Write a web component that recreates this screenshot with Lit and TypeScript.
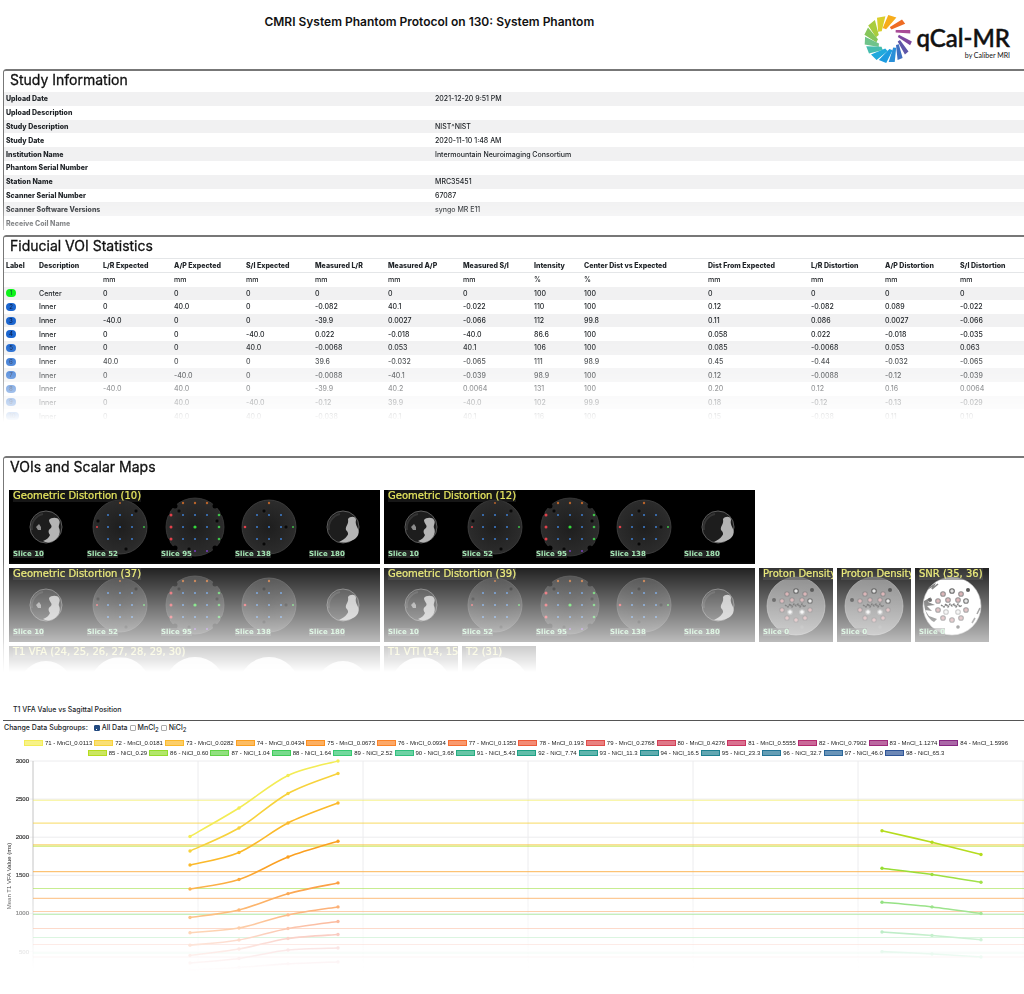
import { LitElement, html, svg, css } from "lit";
import { customElement, property, state } from "lit/decorators.js";
import { classMap } from "lit/directives/class-map.js";

const STUDY: [string, string][] = [
  ["Upload Date", "2021-12-20 9:51 PM"],
  ["Upload Description", ""],
  ["Study Description", "NIST^NIST"],
  ["Study Date", "2020-11-10 1:48 AM"],
  ["Institution Name", "Intermountain Neuroimaging Consortium"],
  ["Phantom Serial Number", ""],
  ["Station Name", "MRC35451"],
  ["Scanner Serial Number", "67087"],
  ["Scanner Software Versions", "syngo MR E11"],
  ["Receive Coil Name", ""],
];

const COLUMNS = [
  "Label", "Description", "L/R Expected", "A/P Expected", "S/I Expected", "Measured L/R", "Measured A/P",
  "Measured S/I", "Intensity", "Center Dist vs Expected", "Dist From Expected", "L/R Distortion",
  "A/P Distortion", "S/I Distortion",
];
const UNITS = ["", "", "mm", "mm", "mm", "mm", "mm", "mm", "%", "%", "mm", "mm", "mm", "mm"];
const VOIS = [
  "1 Center 0 0 0 0 0 0 100 100 0 0 0 0",
  "2 Inner 0 40.0 0 -0.082 40.1 -0.022 110 100 0.12 -0.082 0.089 -0.022",
  "3 Inner -40.0 0 0 -39.9 0.0027 -0.066 112 99.8 0.11 0.086 0.0027 -0.066",
  "4 Inner 0 0 -40.0 0.022 -0.018 -40.0 86.6 100 0.058 0.022 -0.018 -0.035",
  "5 Inner 0 0 40.0 -0.0068 0.053 40.1 106 100 0.085 -0.0068 0.053 0.063",
  "6 Inner 40.0 0 0 39.6 -0.032 -0.065 111 98.9 0.45 -0.44 -0.032 -0.065",
  "7 Inner 0 -40.0 0 -0.0088 -40.1 -0.039 98.9 100 0.12 -0.0088 -0.12 -0.039",
  "8 Inner -40.0 40.0 0 -39.9 40.2 0.0064 131 100 0.20 0.12 0.16 0.0064",
  "9 Inner 0 40.0 -40.0 -0.12 39.9 -40.0 102 99.9 0.18 -0.12 -0.13 -0.029",
  "10 Inner 0 40.0 40.0 -0.038 40.1 40.1 116 100 0.15 -0.038 0.11 0.10",
].map((r) => r.split(" "));

@customElement("qcal-logo")
export class QcalLogo extends LitElement {
  static styles = css`
    :host { display: flex; align-items: center; gap: 5px; color: #111; }
    .mark { width: 48px; height: 48px; flex: none; }
    .words { display: flex; flex-direction: column; align-items: flex-end; padding-top: 6px; }
    .name { font: 500 24px/26px Lato, sans-serif; -webkit-text-stroke: 0.5px #111; white-space: nowrap; }
    .by { font: 7px/8px Lato, sans-serif; white-space: nowrap; }
  `;
  render() {
    const petals: [number, number, string][] = [
      [79, 13, "#f7ac1b"], [107, 13, "#d9cf2c"], [135, 13, "#a9cc3d"], [160, 12, "#86c55a"],
      [184, 12, "#6fc38a"], [208, 12, "#45bcae"], [232, 12, "#1fa9dc"], [256, 12, "#1c9be0"],
      [279, 9, "#2a8fd8"], [301, 8, "#3f6fc0"], [323, 7, "#5e56a8"], [349, 6, "#7d489f"],
      [18, 5, "#a94c97"], [48, 8, "#ee6c23"],
    ];
    const pt = (r: number, a: number) => {
      const t = (a * Math.PI) / 180;
      return `${(24 + r * Math.cos(t)).toFixed(1)} ${(24 - r * Math.sin(t)).toFixed(1)}`;
    };
    return html`
      <svg class="mark" viewBox="0 0 48 48" aria-hidden="true">
        ${petals.map(([a, w, c]) => svg`<path fill=${c}
          d="M${pt(24, a + w * 0.8)}L${pt(23, a - w * 0.8)}L${pt(10, a + 22)}Q${pt(12, a + 34)} ${pt(12, a + 25 + w)}Z"/>`)}
      </svg>
      <span class="words"><span class="name">qCal-MR</span><span class="by">by Caliber MRI</span></span>
    `;
  }
}

const BLUE = "#3f7fd0", RED = "#e0414a", GREEN = "#3fbf4a", ORANGE = "#b8642c", PURPLE = "#7a3fc0";

@customElement("scan-strip")
export class ScanStrip extends LitElement {
  static styles = css`
    :host { display: block; position: relative; height: 74px; overflow: hidden; background: #000; }
    svg { display: block; height: 74px; }
    .title { position: absolute; left: 4px; top: 0; white-space: nowrap; font: 10px/12px "DejaVu Sans", sans-serif; color: #e8e860; background: #2a2a2a88; -webkit-text-stroke: 0.2px #e8e860; }
    .slices { position: absolute; left: 0; bottom: 5px; display: flex; }
    .cell { width: 74px; padding-left: 4px; box-sizing: border-box; font: bold 7px/9px "DejaVu Sans", sans-serif; color: #a4e6b4; white-space: nowrap; }
    .cell span { background: #3a3a3a99; }
  `;
  @property() heading = "";
  @property() kind: "geo" | "plain" | "proton" | "snr" | "bright" = "geo";

  private dot(x: number, y: number, c: string, r = 1) {
    return svg`<circle cx=${x} cy=${y} r=${r} fill=${c}/>`;
  }
  private hole(x: number, y: number) {
    return svg`<circle cx=${x} cy=${y} r="2" fill="#080808" stroke="#333" stroke-width=".6"/>`;
  }
  private grid(cx: number) {
    return [-12, 0, 12].map((dx) => [-12, 0, 12].map((dy) => this.dot(cx + dx, 37 + dy, BLUE)));
  }
  private bowl(cx: number, left: boolean) {
    return svg`
      <circle cx=${cx} cy="37" r="16" fill="#1d1d1d" stroke="#5c5c5c" stroke-width="1"/>
      <path d="M${cx - 14} 40A14 14 0 0 1 ${cx - 3} 24" stroke="#343434" stroke-width="2" fill="none"/>
      ${left
        ? svg`<path fill="#b4b4b4" d="M40 30c2-3 9-3 10 0c2 3-1 5 0 8c2 4 0 9-4 12c-4 3-9 3-12 1c3-1 6-3 7-6c-2-3-2-5 1-7c2-3-2-4-2-8z"/>
            <path fill="#8c8c8c" d="M27 37l3-3l2 3v3l-3 0z"/>`
        : svg`<path fill="#b4b4b4" d="M339 29c2-3 8-3 8 1c-1 4 1 6 2 9c2 5-1 9-5 11c-4 2-8 3-14 2c3-2 6-3 8-6c2-2 1-4-1-6c-1-4 3-5 2-11z"/>`}`;
  }
  private lobes(cx: number) {
    const n: unknown[] = [];
    for (const [x, y] of [[-20, -21], [20, -21], [-20, 21], [20, 21], [-28, -14], [28, -14], [-28, 14], [28, 14]])
      n.push(svg`<circle cx=${cx + x} cy=${37 + y} r="2.5" fill="#000"/>`);
    return n;
  }
  private wide() {
    const bright = this.kind === "bright";
    if (bright) {
      return svg`${[37, 111, 186, 260, 334].map(
        (x, i) => svg`<circle cx=${x} cy="41" r=${i % 4 ? 30 : 26} fill="#fff" opacity=".9"/>`)}`;
    }
    return svg`
      ${this.bowl(37, true)}
      <circle cx="111" cy="37" r="27" fill="url(#g)" stroke="#444" stroke-width=".8"/>
      ${this.hole(127, 21)}${this.hole(89, 31)}${this.hole(117, 59)}${this.grid(111)}
      ${this.dot(111, 13, ORANGE)}${this.dot(88, 37, RED)}${this.dot(135, 37, GREEN)}
      <circle cx="186" cy="37" r="29" fill="url(#g)" stroke="#3c3c3c" stroke-width=".8"/>
      ${this.lobes(186)}${this.hole(170, 21)}${this.hole(208, 31)}${this.hole(180, 59)}${this.grid(186)}
      ${[174, 186, 198].map((x) => this.dot(x, 13, ORANGE, 1.2))}
      ${[25, 37, 49].map((y) => [this.dot(162, y, RED, 1.5), this.dot(210, y, GREEN, 1.3)])}
      ${this.dot(186, 37, "#35d63c", 1.6)}${this.dot(186, 61, PURPLE)}${this.dot(198, 61, PURPLE)}
      <circle cx="260" cy="37" r="27" fill="url(#g)" stroke="#444" stroke-width=".8"/>
      ${this.hole(255, 21)}${this.hole(277, 37)}${this.hole(255, 54)}${this.grid(260)}
      ${this.dot(260, 13, ORANGE, 1.2)}${this.dot(236, 37, RED, 1.3)}${this.dot(284, 37, GREEN)}
      ${this.bowl(334, false)}`;
  }
  private single() {
    const snr = this.kind === "snr";
    if (this.kind === "plain") return svg`<circle cx="37" cy="41" r="30" fill="#fff" opacity=".9"/>`;
    const rings = [
      [37, 23, 1], [46, 26, 0], [28, 26, 0], [23, 33, 0], [51, 33, 1], [51, 42, 0], [23, 42, 0], [31, 44, 2],
      [43, 44, 2], [33, 32, 0], [43, 32, 0], [28, 50, 0], [37, 52, 0], [46, 50, 0],
    ];
    return svg`
      <circle cx="37" cy="38" r="29" fill=${snr ? "#fff" : "url(#p)"} stroke="#aaa" stroke-width=".6"/>
      ${snr ? svg`
        <path d="M9 33l7-4l-3 5l7 3l-8 1l5 5l-7-1l4 6l8 3l-3 3c-6-3-10-11-10-21z" fill="#3a3a3a"/>
        <path d="M14 20l5-3l-2 4l6-5M62 46l3-6M60 50l-3 5" stroke="#555" stroke-width="1.6" fill="none"/>` : ""}
      ${rings.map(([x, y, k]) => svg`<circle cx=${x} cy=${y} r="2.3" fill=${k === 1 ? "#d8d8d8" : k === 2 ? "#eee" : "#c98f92"}
        stroke=${k === 2 ? "#999" : k === 1 ? "#222" : "#5a5557"} stroke-width="1.1"/>`)}
      <circle cx="53" cy="22" r="2" fill="#111"/><circle cx="15" cy="32" r="2" fill="#111"/>
      <circle cx="43" cy="59" r="1.8" fill=${snr ? "#222" : "#777"}/>
      <path d="M26 37l3 2l2-3l2 3l2-3l2 2l2-2l2 3l2-3l2 3l2-2" stroke="#222" stroke-width="1.4" stroke-dasharray="2 .6" fill="none"/>`;
  }
  render() {
    const wide = this.kind === "geo" || this.kind === "bright";
    const w = wide ? 371 : 74;
    const cells = this.kind === "geo" ? [10, 52, 95, 138, 180] : this.kind === "proton" || this.kind === "snr" ? [0] : [];
    return html`
      <svg width=${w} viewBox="0 0 ${w} 74" aria-hidden="true">
        <defs>
          <radialGradient id="g"><stop offset="0" stop-color="#1e1e1e"/><stop offset="1" stop-color="#2c2c2c"/></radialGradient>
          <linearGradient id="p" x1="0" y1="0" x2=".5" y2="1"><stop offset="0" stop-color="#777"/><stop offset="1" stop-color="#6a6a6a"/></linearGradient>
        </defs>
        ${wide ? this.wide() : this.single()}
      </svg>
      <div class="title">${this.heading}</div>
      <div class="slices">${cells.map((n) => html`<div class="cell"><span>Slice ${n}</span></div>`)}</div>
    `;
  }
}

type Series = { name: string; color: string; family: "Mn" | "Ni"; ref?: number; ys?: number[] };
const MN_X = [190, 239, 288, 338];
const NI_X = [882, 932, 981];
const SERIES: Series[] = [
  { name: "71 - MnCl_0.0113", color: "#f3ec55", family: "Mn", ref: 2485, ys: [2009, 2383, 2810, 3000] },
  { name: "72 - MnCl_0.0181", color: "#f7d23c", family: "Mn", ref: 2184, ys: [1819, 2121, 2574, 2836] },
  { name: "73 - MnCl_0.0282", color: "#fbb92a", family: "Mn", ref: 1901, ys: [1636, 1800, 2186, 2449] },
  { name: "74 - MnCl_0.0434", color: "#fb9f20", family: "Mn", ref: 1549, ys: [1321, 1445, 1740, 1947] },
  { name: "75 - MnCl_0.0673", color: "#fb8d1e", family: "Mn", ref: 1196, ys: [947, 1045, 1259, 1400] },
  { name: "76 - MnCl_0.0934", color: "#fb8328", family: "Mn", ref: 1025, ys: [747, 809, 980, 1085] },
  { name: "77 - MnCl_0.1353", color: "#f76d30", family: "Mn", ref: 802, ys: [582, 651, 802, 894] },
  { name: "78 - MnCl_0.193", color: "#ee5a3a", family: "Mn", ref: 592, ys: [448, 533, 671, 723] },
  { name: "79 - MnCl_0.2768", color: "#e04c4a", family: "Mn", ref: 428, ys: [349, 409, 520, 546] },
  { name: "80 - MnCl_0.4276", color: "#d23f55", family: "Mn", ys: [258, 290, 337, 363] },
  { name: "81 - MnCl_0.5555", color: "#c93461", family: "Mn" },
  { name: "82 - MnCl_0.7902", color: "#b42a6e", family: "Mn" },
  { name: "83 - MnCl_1.1274", color: "#9e2879", family: "Mn" },
  { name: "84 - MnCl_1.5996", color: "#862781", family: "Mn" },
  { name: "85 - NiCl_0.29", color: "#b5dc1e", family: "Ni", ref: 1882, ys: [2085, 1933, 1773] },
  { name: "86 - NiCl_0.60", color: "#92dc2c", family: "Ni", ref: 1327, ys: [1592, 1511, 1408] },
  { name: "87 - NiCl_1.04", color: "#62d348", family: "Ni", ref: 986, ys: [1147, 1085, 999] },
  { name: "88 - NiCl_1.64", color: "#3fcb5b", family: "Ni", ref: 684, ys: [756, 710, 654] },
  { name: "89 - NiCl_2.52", color: "#36c872", family: "Ni", ref: 480, ys: [498, 468, 428] },
  { name: "90 - NiCl_3.68", color: "#30bf7e", family: "Ni" },
  { name: "91 - NiCl_5.43", color: "#26ad80", family: "Ni" },
  { name: "92 - NiCl_7.74", color: "#1ea184", family: "Ni" },
  { name: "93 - NiCl_11.3", color: "#1c968a", family: "Ni" },
  { name: "94 - NiCl_16.5", color: "#1c898c", family: "Ni" },
  { name: "95 - NiCl_23.3", color: "#1f8090", family: "Ni" },
  { name: "96 - NiCl_32.7", color: "#247596", family: "Ni" },
  { name: "97 - NiCl_46.0", color: "#2a669a", family: "Ni" },
  { name: "98 - NiCl_65.3", color: "#2f5597", family: "Ni" },
];

@customElement("t1-chart")
export class T1Chart extends LitElement {
  static styles = css`
    :host { display: block; }
    .title { margin: 0 0 5px; padding-left: 13px; font-size: 7px; line-height: 10px; font-weight: 500; }
    .options { margin-left: 3px; border-top: 1px solid #555; padding: 2px 0 0 1px; display: flex; align-items: center; gap: 2px; font-size: 7px; line-height: 10px; font-weight: 500; height: 10px; }
    .lead { margin-right: 4px; }
    label { display: flex; align-items: center; gap: 2px; }
    sub { font-size: 6px; line-height: 0; }
    input { appearance: none; width: 6px; height: 6px; margin: 0; border: 1px solid #aaa; border-radius: 1px; background: #fff; }
    input:checked { border-color: #234a80; background: #234a80 conic-gradient(from 200deg at 45% 75%, #fff 8%, #234a80 0); }
    .fade { mask-image: linear-gradient(#000 132px, #0009 178px, #0002 216px, transparent 238px); }
    .legend { padding: 5px 0 0 8px; font: 6px/8px "Liberation Sans", sans-serif; color: #222; }
    .row { display: flex; justify-content: center; gap: 2px; height: 10px; align-items: center; }
    .key { display: flex; align-items: center; gap: 2px; white-space: nowrap; }
    .swatch { box-sizing: border-box; width: 19px; height: 6px; border: 1px solid; }
    .swatch i { display: block; height: 4px; background: currentColor; opacity: 0.7; }
    .plot { display: block; width: 100%; }
    .tick { font: 6px "Liberation Sans", sans-serif; fill: #333; text-anchor: end; stroke: #333; stroke-width: 0.2px; }
    .axis { font: 6px "Liberation Sans", sans-serif; fill: #222; text-anchor: middle; }
    .grid { stroke: #ececee; stroke-width: 1; }
  `;
  @state() private group: "all" | "Mn" | "Ni" = "all";

  private y(v: number) {
    return 3 + ((3000 - v) * 38.1) / 500;
  }
  private curve(xs: number[], vs: number[]) {
    const p = xs.map((x, i) => [x, this.y(vs[i])]);
    let d = `M${p[0].join(" ")}`;
    for (let i = 0; i < p.length - 1; i++) {
      const a = p[Math.max(i - 1, 0)], b = p[i], c = p[i + 1], e = p[Math.min(i + 2, p.length - 1)];
      d += `C${b[0] + (c[0] - a[0]) / 6} ${b[1] + (c[1] - a[1]) / 6} ${c[0] - (e[0] - b[0]) / 6} ${c[1] - (e[1] - b[1]) / 6} ${c[0]} ${c[1]}`;
    }
    return d;
  }
  private option(id: "all" | "Mn" | "Ni", text: unknown) {
    return html`<label><input type="checkbox" .checked=${this.group === id} @change=${() => (this.group = id)} />
      <span>${text}</span></label>`;
  }
  private keys(f: "Mn" | "Ni") {
    return html`<div class="row">${SERIES.filter((s) => s.family === f).map(
      (s) => html`<span class="key"><span class="swatch" style="color:${s.color}"><i></i></span>${s.name}</span>`)}</div>`;
  }
  render() {
    const shown = SERIES.filter((s) => this.group === "all" || s.family === this.group);
    return html`
      <h3 class="title">T1 VFA Value vs Sagittal Position</h3>
      <div class="options">
        <span class="lead">Change Data Subgroups:</span>
        ${this.option("all", "All Data")}
        ${this.option("Mn", html`MnCl<sub>2</sub>`)}
        ${this.option("Ni", html`NiCl<sub>2</sub>`)}
      </div>
      <div class="fade">
        <div class="legend">${this.keys("Mn")}${this.keys("Ni")}</div>
        <svg class="plot" viewBox="0 0 1024 232" role="img" aria-label="Mean T1 VFA value by sagittal position">
          ${[3000, 2500, 2000, 1500, 1000, 500].map((v) => svg`
            <path class="grid" d="M29 ${this.y(v)}H1024"/>
            <text class="tick" x="29" y=${this.y(v) + 2}>${v}</text>`)}
          ${[198, 363, 528, 693, 858, 1023].map((x) => svg`<path class="grid" d="M${x} 3V232"/>`)}
          <path d="M33 3V232" stroke="#c4c4c4"/>
          <text class="axis" transform="translate(11 118) rotate(-90)">Mean T1 VFA Value (ms)</text>
          ${shown.map((s) => s.ref ? svg`<path d="M33 ${this.y(s.ref)}H1024" stroke=${s.color} stroke-width="1.2" opacity=".65"/>` : "")}
          ${shown.map((s) => {
            if (!s.ys) return "";
            const xs = s.family === "Mn" ? MN_X : NI_X;
            return svg`<path d=${this.curve(xs, s.ys)} fill="none" stroke=${s.color} stroke-width="1.6"/>
              ${s.ys.map((v, i) => svg`<circle cx=${xs[i]} cy=${this.y(v)} r="1.7" fill=${s.color}/>`)}`;
          })}
        </svg>
      </div>
    `;
  }
}

@customElement("app-root")
export class AppRoot extends LitElement {
  static styles = css`
    :host { display: block; min-height: 100vh; overflow: hidden; background: #fff; color: #212529; font-family: Inter, sans-serif; }
    .top { display: flex; align-items: flex-start; height: 69px; }
    h1 { flex: 1; margin: 15px 0 0; text-align: center; font-size: 12px; line-height: 14px; font-weight: 600; color: #111; }
    qcal-logo { margin: 15px 14px 0 5px; }
    .panel { margin: 0 0 0 3px; border: solid #777; border-width: 2px 0 0 1px; border-top-left-radius: 3px; box-sizing: border-box; }
    h2 { margin: 0; padding: 0 0 4px 6px; font-size: 14px; line-height: 17px; font-weight: 400; color: #111; -webkit-text-stroke: 0.3px #111; }
    .study { height: 161px; margin-bottom: 5px; mask-image: linear-gradient(#000 132px, #0005 165px); }
    .stats { height: 187px; mask-image: linear-gradient(#000 105px, #000a 140px, #0005 163px, transparent 187px); }
    .maps { height: 218px; margin-top: 34px; overflow: hidden; mask-image: linear-gradient(#000 106px, #000d 112px, #0004 186px, #0003 190px, transparent 216px); }
    table { width: 100%; border-collapse: collapse; table-layout: fixed; font-size: 7px; line-height: 9px; }
    th, td { padding: 0 0 0 2px; text-align: left; white-space: nowrap; }
    th { font-weight: 800; }
    td { font-weight: 500; }
    .study table { height: 138px; }
    .study th { width: 429px; box-sizing: border-box; }
    .study tr:nth-child(odd), .stats tbody tr:nth-child(odd) { background: #f1f1f2; }
    .stats table { height: 165px; }
    .stats thead tr { height: 14px; border-top: 1px solid #e4e6e8; }
    .w33 { width: 33px; } .w50 { width: 50px; } .w64 { width: 64px; } .w69 { width: 69px; }
    .w71 { width: 71px; } .w72 { width: 72px; } .w73 { width: 73px; } .w74 { width: 74px; }
    .w75 { width: 75px; } .w103 { width: 103px; } .w124 { width: 124px; }
    .badge { display: block; width: 10px; height: 8px; border-radius: 4px; background: #1c66cf; color: #0a1f4d; font-size: 6px; line-height: 8px; text-align: center; }
    .badge.center { background: #0df21a; color: #063; }
    .badge.two { width: 13px; }
    .strips { display: flex; flex-wrap: wrap; gap: 4px; padding: 11px 0 0 5px; }
    .wide { width: 371px; }
    .tile { width: 74px; }
    t1-chart { margin-top: 31px; }
  `;
  render() {
    const widths = [33, 64, 71, 72, 69, 73, 75, 71, 50, 124, 103, 74, 75];
    const strip = (heading: string, kind: string) =>
      html`<scan-strip class=${kind === "geo" || kind === "bright" ? "wide" : "tile"} .heading=${heading} .kind=${kind}></scan-strip>`;
    return html`
      <header class="top">
        <h1>CMRI System Phantom Protocol on 130: System Phantom</h1>
        <qcal-logo></qcal-logo>
      </header>
      <section class="panel study">
        <h2>Study Information</h2>
        <table><tbody>
          ${STUDY.map(([k, v]) => html`<tr><th scope="row">${k}</th><td>${v}</td></tr>`)}
        </tbody></table>
      </section>
      <section class="panel stats">
        <h2>Fiducial VOI Statistics</h2>
        <table>
          <colgroup>${widths.map((w) => html`<col class="w${w}" />`)}<col /></colgroup>
          <thead>
            <tr>${COLUMNS.map((c) => html`<th scope="col">${c}</th>`)}</tr>
            <tr>${UNITS.map((u) => html`<td>${u}</td>`)}</tr>
          </thead>
          <tbody>
            ${VOIS.map((r) => html`<tr>${r.map((c, i) => i === 0
              ? html`<td><span class=${classMap({ badge: true, center: c === "1", two: c.length > 1 })}>${c}</span></td>`
              : html`<td>${c}</td>`)}</tr>`)}
          </tbody>
        </table>
      </section>
      <section class="panel maps">
        <h2>VOIs and Scalar Maps</h2>
        <div class="strips">
          ${strip("Geometric Distortion (10)", "geo")}${strip("Geometric Distortion (12)", "geo")}
          ${strip("Geometric Distortion (37)", "geo")}${strip("Geometric Distortion (39)", "geo")}
          ${strip("Proton Density", "proton")}${strip("Proton Density", "proton")}${strip("SNR (35, 36)", "snr")}
          ${strip("T1 VFA (24, 25, 26, 27, 28, 29, 30)", "bright")}${strip("T1 VTI (14, 15)", "plain")}${strip("T2 (31)", "plain")}
        </div>
      </section>
      <t1-chart></t1-chart>
    `;
  }
}
